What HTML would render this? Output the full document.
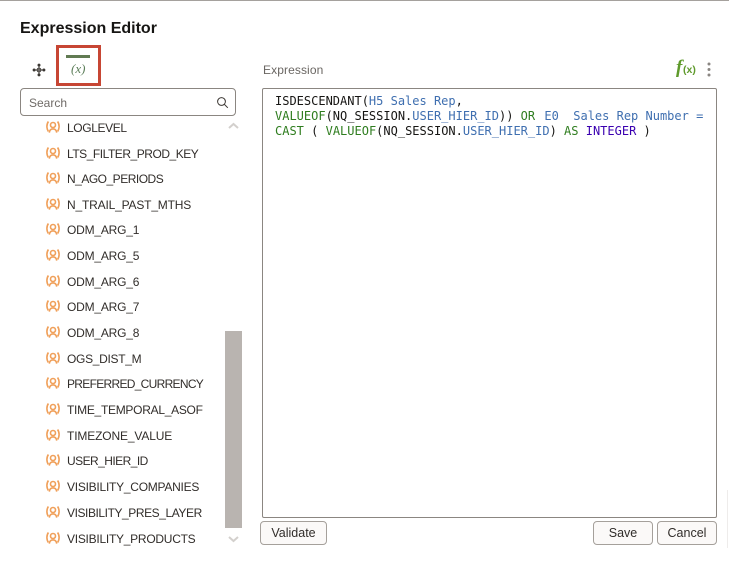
<!DOCTYPE html>
<html><head><meta charset="utf-8"><style>
html,body{margin:0;padding:0;background:#fff}
body{width:729px;height:561px;position:relative;overflow:hidden;font-family:"Liberation Sans",sans-serif;color:#312d2a}
.a{position:absolute;white-space:pre}
.row{position:absolute;left:67px;font-size:12px;line-height:16px;white-space:pre;color:#312d2a}
.ic{position:absolute;left:46px;width:14px;height:15px}
.btn{position:absolute;box-sizing:border-box;height:24px;top:521px;border:1px solid #a5a09b;border-radius:4px;background:#fbf9f8;font-size:12.5px;line-height:23px;text-align:center;color:#312d2a}
.code{position:absolute;left:275px;font-family:"DejaVu Sans Mono",monospace;font-size:12px;line-height:15px;white-space:pre;color:#161513}
.g{color:#2f7d1f}.b{color:#3f6fb0}.p{color:#3a00b0}
</style></head><body>
<div class="a" style="left:0;top:0;width:729px;height:1px;background:#a5a19d"></div>
<div class="a" style="left:20px;top:19px;font-size:16px;line-height:20px;font-weight:700;color:#161513">Expression Editor</div>

<svg class="a" style="left:32px;top:63px" width="14" height="14" viewBox="0 0 16 16" fill="none" stroke="#3b3733" stroke-width="1.1"><path d="M8 2V14M2 8H14"/><circle cx="8" cy="8" r="2.2"/><g fill="#3b3733" stroke="none"><circle cx="8" cy="2.4" r="1.7"/><circle cx="8" cy="13.6" r="1.7"/><circle cx="2.4" cy="8" r="1.7"/><circle cx="13.6" cy="8" r="1.7"/></g></svg>

<div class="a" style="left:56px;top:45px;width:45px;height:41px;box-sizing:border-box;border:3px solid #c74634"></div>
<div class="a" style="left:66px;top:55px;width:24px;height:3px;background:#617a52"></div>
<div class="a" style="left:71px;top:61px;font-family:'Liberation Serif',serif;font-style:italic;font-size:13px;line-height:15px;color:#5d7f5a">(x)</div>

<div class="a" style="left:20px;top:88px;width:216px;height:28px;box-sizing:border-box;border:1px solid #8b8681;border-radius:4px;background:#fff"></div>
<div class="a" style="left:29px;top:96px;font-size:12px;line-height:15px;color:#6f6b67">Search</div>
<svg class="a" style="left:216px;top:96px" width="13" height="13" viewBox="0 0 13 13" fill="none" stroke="#3b3733" stroke-width="1"><circle cx="5.5" cy="5.5" r="3.9"/><path d="M8.4 8.4L11.8 11.8"/></svg>

<svg width="0" height="0" style="position:absolute"><defs><symbol id="v" viewBox="0 0 14 15"><g fill="none" stroke="#f0a05a" stroke-width="1.6"><circle cx="7" cy="5" r="2.5"/><path d="M3.3 12.6C3.6 10 5 8.9 7 8.9C9 8.9 10.4 10 10.7 12.6"/><path d="M2.4 1.5C0.4 4.5 0.4 8.5 2.4 11.5"/><path d="M11.6 1.5C13.6 4.5 13.6 8.5 11.6 11.5"/></g></symbol></defs></svg>

<svg class="ic" style="top:120px"><use href="#v"/></svg><div class="row" style="top:120px;letter-spacing:-.37px">LOGLEVEL</div>
<svg class="ic" style="top:146px"><use href="#v"/></svg><div class="row" style="top:146px;letter-spacing:-.47px">LTS_FILTER_PROD_KEY</div>
<svg class="ic" style="top:171px"><use href="#v"/></svg><div class="row" style="top:171px;letter-spacing:-.5px">N_AGO_PERIODS</div>
<svg class="ic" style="top:197px"><use href="#v"/></svg><div class="row" style="top:197px;letter-spacing:-.18px">N_TRAIL_PAST_MTHS</div>
<svg class="ic" style="top:222px"><use href="#v"/></svg><div class="row" style="top:222px;letter-spacing:-.2px">ODM_ARG_1</div>
<svg class="ic" style="top:248px"><use href="#v"/></svg><div class="row" style="top:248px;letter-spacing:-.2px">ODM_ARG_5</div>
<svg class="ic" style="top:274px"><use href="#v"/></svg><div class="row" style="top:274px;letter-spacing:-.2px">ODM_ARG_6</div>
<svg class="ic" style="top:299px"><use href="#v"/></svg><div class="row" style="top:299px;letter-spacing:-.2px">ODM_ARG_7</div>
<svg class="ic" style="top:325px"><use href="#v"/></svg><div class="row" style="top:325px;letter-spacing:-.2px">ODM_ARG_8</div>
<svg class="ic" style="top:351px"><use href="#v"/></svg><div class="row" style="top:351px;letter-spacing:-.3px">OGS_DIST_M</div>
<svg class="ic" style="top:376px"><use href="#v"/></svg><div class="row" style="top:376px;letter-spacing:-.7px">PREFERRED_CURRENCY</div>
<svg class="ic" style="top:402px"><use href="#v"/></svg><div class="row" style="top:402px;letter-spacing:-.28px">TIME_TEMPORAL_ASOF</div>
<svg class="ic" style="top:428px"><use href="#v"/></svg><div class="row" style="top:428px;letter-spacing:-.14px">TIMEZONE_VALUE</div>
<svg class="ic" style="top:453px"><use href="#v"/></svg><div class="row" style="top:453px;letter-spacing:-.55px">USER_HIER_ID</div>
<svg class="ic" style="top:479px"><use href="#v"/></svg><div class="row" style="top:479px;letter-spacing:-.25px">VISIBILITY_COMPANIES</div>
<svg class="ic" style="top:505px"><use href="#v"/></svg><div class="row" style="top:505px;letter-spacing:-.43px">VISIBILITY_PRES_LAYER</div>
<svg class="ic" style="top:531px"><use href="#v"/></svg><div class="row" style="top:531px;letter-spacing:-.26px">VISIBILITY_PRODUCTS</div>

<svg class="a" style="left:227px;top:121px" width="13" height="10" viewBox="0 0 13 10" fill="none" stroke="#d3d0cd" stroke-width="2"><path d="M2 7L6.5 3L11 7"/></svg>
<div class="a" style="left:225px;top:331px;width:17px;height:197px;background:#b9b4b0"></div>
<svg class="a" style="left:227px;top:534px" width="13" height="10" viewBox="0 0 13 10" fill="none" stroke="#d3d0cd" stroke-width="2"><path d="M2 3L6.5 7L11 3"/></svg>

<div class="a" style="left:263px;top:63px;font-size:12px;line-height:14px;letter-spacing:.1px;color:#6a6662">Expression</div>
<div class="a" style="left:676px;top:58px;font-family:'Liberation Serif',serif;font-style:italic;font-weight:700;font-size:19px;line-height:20px;color:#5f9a2c">f</div>
<div class="a" style="left:683px;top:64px;font-family:'Liberation Sans',sans-serif;font-weight:700;font-size:10.5px;line-height:12px;color:#5f9a2c">(x)</div>
<svg class="a" style="left:706px;top:62px" width="6" height="15" viewBox="0 0 6 15" fill="#8a8682"><circle cx="3" cy="2" r="1.5"/><circle cx="3" cy="7.5" r="1.5"/><circle cx="3" cy="13" r="1.5"/></svg>

<div class="a" style="left:262px;top:88px;width:455px;height:430px;box-sizing:border-box;border:1px solid #8b8681;border-radius:2px;background:#fff"></div>
<div class="code" style="top:94px">ISDESCENDANT(<span class="b">H5 Sales Rep</span>,</div>
<div class="code" style="top:109px"><span class="g">VALUEOF</span>(NQ_SESSION.<span class="b">USER_HIER_ID</span>)) <span class="g">OR</span> <span class="b" style="margin-left:2px">E0  Sales Rep Number =</span></div>
<div class="code" style="top:124px"><span class="g">CAST</span> ( <span class="g">VALUEOF</span>(NQ_SESSION.<span class="b">USER_HIER_ID</span>) <span class="g">AS</span> <span class="p">INTEGER</span> )</div>

<div class="btn" style="left:260px;width:67px">Validate</div>
<div class="btn" style="left:593px;width:60px">Save</div>
<div class="btn" style="left:657px;width:60px">Cancel</div>
<div class="a" style="left:727px;top:490px;width:1px;height:58px;background:#eeeceb"></div>
</body></html>
